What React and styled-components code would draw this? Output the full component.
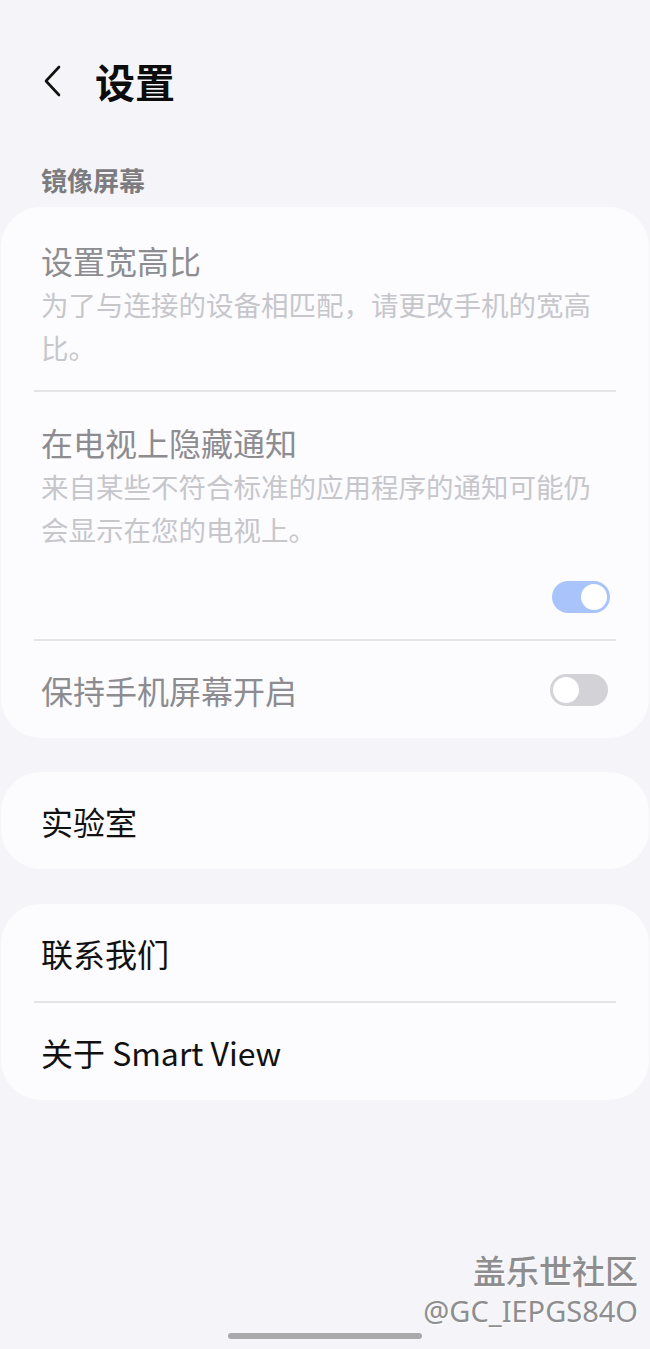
import styled, { createGlobalStyle } from "styled-components";

const GlobalStyle = createGlobalStyle`
  html, body {
    margin: 0;
    padding: 0;
    background: #f5f5f9;
  }
  body {
    font-family: "Noto Sans CJK SC", "Noto Sans", Roboto, sans-serif;
  }
`;

function App() {
  return (
    <>
      <GlobalStyle />
      <Page>
        <Header>
          <BackButton aria-label="返回">
            <svg width="20" height="32" viewBox="0 0 20 32" fill="none">
              <path
                d="M16 2 L3 16 L16 30"
                stroke="#111"
                strokeWidth="2.6"
                strokeLinecap="round"
                strokeLinejoin="round"
              />
            </svg>
          </BackButton>
          <Title>设置</Title>
        </Header>

        <SectionLabel>镜像屏幕</SectionLabel>

        <Card $gap={9}>
          <Item $top={32} $bottom={21}>
            <ItemTitle $disabled>设置宽高比</ItemTitle>
            <ItemSub>为了与连接的设备相匹配，请更改手机的宽高比。</ItemSub>
          </Item>
          <Divider />
          <Item $top={29} $bottom={26}>
            <ItemTitle $disabled>在电视上隐藏通知</ItemTitle>
            <ItemSub>来自某些不符合标准的应用程序的通知可能仍会显示在您的电视上。</ItemSub>
            <ToggleRow>
              <Toggle $on />
            </ToggleRow>
          </Item>
          <Divider />
          <Row>
            <ItemTitle $disabled>保持手机屏幕开启</ItemTitle>
            <Toggle />
          </Row>
        </Card>

        <Card $gap={34}>
          <Row>
            <ItemTitle>实验室</ItemTitle>
          </Row>
        </Card>

        <Card $gap={35}>
          <Row>
            <ItemTitle>联系我们</ItemTitle>
          </Row>
          <Divider />
          <Row>
            <ItemTitle>关于 Smart View</ItemTitle>
          </Row>
        </Card>

        <Spacer />

        <Watermark>
          <WatermarkBrand>盖乐世社区</WatermarkBrand>
          <WatermarkUser>@GC_IEPGS84O</WatermarkUser>
        </Watermark>

        <HomeBar />
      </Page>
    </>
  );
}

export default App;

const Page = styled.div`
  width: 650px;
  height: 1349px;
  display: flex;
  flex-direction: column;
  box-sizing: border-box;
  padding-top: 55px;
  overflow: hidden;
`;

const Header = styled.header`
  display: flex;
  align-items: center;
  height: 52px;
  padding-left: 43px;
  gap: 32px;
`;

const BackButton = styled.button`
  background: none;
  border: none;
  padding: 0;
  display: flex;
  align-items: center;
  cursor: pointer;
`;

const Title = styled.h1`
  margin: 0;
  font-size: 40px;
  font-weight: 700;
  color: #0c0c0c;
  line-height: 52px;
`;

const SectionLabel = styled.div`
  margin: 55px 0 0 41px;
  font-size: 26px;
  font-weight: 700;
  color: #7b7b80;
  line-height: 36px;
`;

const Card = styled.section`
  margin: ${(p) => p.$gap}px 1px 0;
  background: #fcfcff;
  border-radius: 40px;
  display: flex;
  flex-direction: column;
`;

const Item = styled.div`
  padding: ${(p) => p.$top}px 40px ${(p) => p.$bottom}px;
  display: flex;
  flex-direction: column;
`;

const Row = styled.div`
  height: 97px;
  padding: 0 41px 0 40px;
  display: flex;
  align-items: center;
  justify-content: space-between;
`;

const ItemTitle = styled.div`
  font-size: 32px;
  line-height: 42px;
  color: ${(p) => (p.$disabled ? "#8c8c91" : "#111111")};
`;

const ItemSub = styled.div`
  margin-top: 2px;
  font-size: 27.5px;
  line-height: 43px;
  color: #c6c6cb;
  padding-right: 14px;
`;

const ToggleRow = styled.div`
  display: flex;
  justify-content: flex-end;
  margin-top: 30px;
  margin-right: -1px;
`;

const Toggle = styled.span`
  position: relative;
  flex: none;
  width: 58px;
  height: 32px;
  border-radius: 16px;
  box-sizing: border-box;
  background: ${(p) => (p.$on ? "#a9c4fb" : "#d3d3d7")};

  &::after {
    content: "";
    position: absolute;
    top: 3px;
    left: ${(p) => (p.$on ? "29px" : "3px")};
    width: 26px;
    height: 26px;
    border-radius: 50%;
    background: #ffffff;
  }
`;

const Divider = styled.hr`
  margin: 0 33px;
  border: none;
  height: 2px;
  background: #e4e4e8;
`;

const Spacer = styled.div`
  flex: 1;
`;

const Watermark = styled.div`
  display: flex;
  flex-direction: column;
  align-items: flex-end;
  padding-right: 12px;
  color: #8e8e90;
  text-shadow: 1px 1px 0 #ffffff;
`;

const WatermarkBrand = styled.div`
  font-size: 33px;
  line-height: 42px;
  font-weight: 500;
`;

const WatermarkUser = styled.div`
  font-family: "Noto Sans", "Open Sans", sans-serif;
  font-size: 29px;
  line-height: 40px;
`;

const HomeBar = styled.div`
  align-self: center;
  width: 194px;
  height: 6px;
  border-radius: 3px;
  background: #a9a9ab;
  margin: 2px 0 10px;
`;
